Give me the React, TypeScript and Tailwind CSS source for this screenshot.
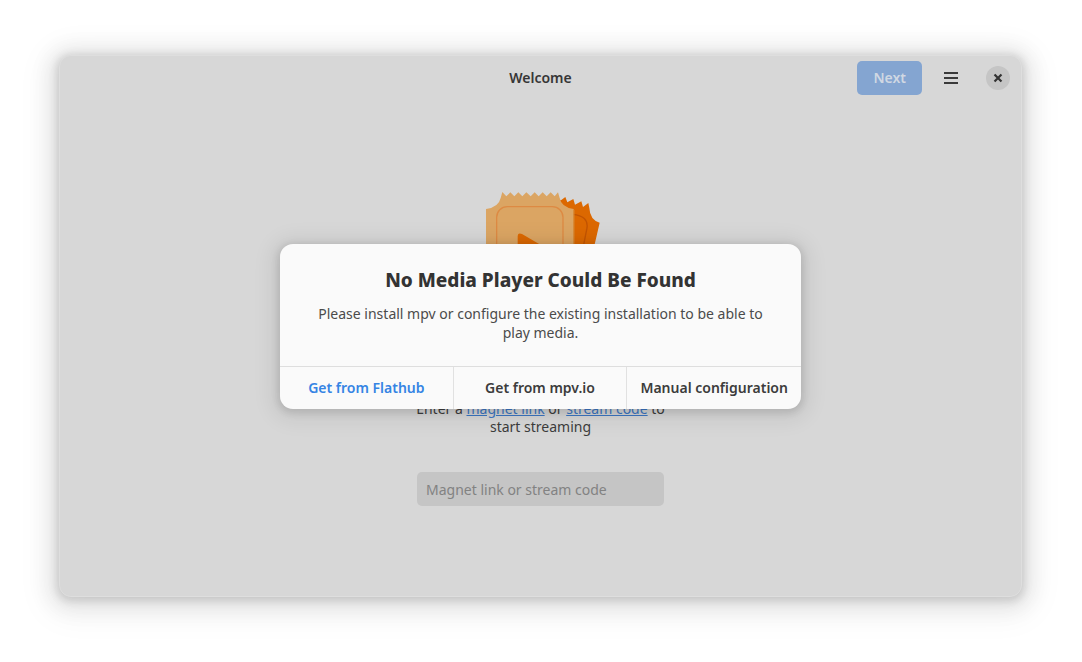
import React from "react";

function TicketIcon() {
  return (
    <svg viewBox="21 30 384 384" className="size-32" aria-hidden="true">
      <path
        d="M262 62 L274 60 L286 51 L292 67 L310 57 L315 74 L334 64 L339 81 L355 69 L358 84 Q360 120 389 128 L340 340 L240 340 Z"
        fill="#dc6800"
      />
      <path d="M308 103 Q356 108 351 144 L330 250" fill="none" stroke="#c25400" strokeWidth="4" />
      <path
        d="M48 87 Q86 82 92 54 L97 36 L109 49 L121 37 L133 49 L145 37 L157 49 L169 37 L182 49 L194 37 L206 49 L218 37 L230 49 L242 37 L254 49 L264 37 L269 54 Q274 82 311 87 L311 340 L48 340 Z"
        fill="#dba563"
      />
      <path d="M312 90 V340" stroke="#d6862f" strokeWidth="3" />
      <rect x="80" y="80" width="199" height="240" rx="32" fill="none" stroke="#dd8a43" strokeWidth="4" />
      <path d="M143 170 Q143 156 156 162 L238 210 L156 262 Q143 268 143 256 Z" fill="#dc6800" />
    </svg>
  );
}

function MenuIcon() {
  return (
    <svg viewBox="0 0 16 16" className="size-4" aria-hidden="true">
      <path d="M1 3h14M1 8h14M1 13h14" stroke="#3a3a3a" strokeWidth="2" />
    </svg>
  );
}

function CloseIcon() {
  return (
    <svg viewBox="0 0 16 16" className="size-4" aria-hidden="true">
      <path d="M5.3 5.3l5.4 5.4M10.7 5.3l-5.4 5.4" stroke="#333333" strokeWidth="2.2" strokeLinecap="square" />
    </svg>
  );
}

function HeaderBar() {
  return (
    <header className="grid grid-cols-[1fr_auto_1fr] items-center px-[11px] pt-[5px]">
      <span />
      <h1 className="text-sm font-semibold text-[#363636]">Welcome</h1>
      <div className="flex items-center justify-end">
        <button type="button" disabled className="h-[34px] rounded-[5px] bg-[#84a5d1] px-4 text-sm font-semibold text-[#d0d8e3]">
          Next
        </button>
        <button type="button" aria-label="Main menu" className="ml-3 flex size-[34px] items-center justify-center">
          <MenuIcon />
        </button>
        <button type="button" aria-label="Close" className="ml-[18px] flex size-6 items-center justify-center rounded-full bg-[#c5c5c5]">
          <CloseIcon />
        </button>
      </div>
    </header>
  );
}

function WelcomePage() {
  return (
    <main className="flex flex-1 flex-col items-center pt-[95px]">
      <TicketIcon />
      <p className="mt-[82px] w-[260px] text-center text-sm leading-[18px] text-[#3d3d3d]">
        Enter a{" "}
        <a href="#magnet" className="text-[#3d77c4] underline">
          magnet link
        </a>{" "}
        or{" "}
        <a href="#stream" className="text-[#3d77c4] underline">
          stream code
        </a>{" "}
        to start streaming
      </p>
      <input
        type="text"
        aria-label="Magnet link or stream code"
        placeholder="Magnet link or stream code"
        className="mt-9 h-[34px] w-[247px] rounded-[5px] bg-[#c5c5c5] px-[9px] text-sm text-[#363636] placeholder:text-[#828282]"
      />
    </main>
  );
}

function PlayerDialog() {
  return (
    <div
      role="alertdialog"
      aria-labelledby="dialog-title"
      aria-describedby="dialog-body"
      className="w-[521px] overflow-hidden rounded-[13px] bg-[#fafafa] text-center shadow-[0_2px_8px_2px_rgba(0,0,0,0.13),0_3px_20px_10px_rgba(0,0,0,0.06)]"
    >
      <div className="px-8 pt-6 pb-6">
        <h2 id="dialog-title" className="text-[19px] leading-6 font-extrabold text-[#333333]">
          No Media Player Could Be Found
        </h2>
        <p id="dialog-body" className="mt-3 text-sm leading-[19px] text-[#4b4b4b]">
          Please install mpv or configure the existing installation to be able to play media.
        </p>
      </div>
      <div className="grid grid-cols-3 divide-x divide-[#e1e1e1] border-t border-[#dedede] text-sm font-semibold whitespace-nowrap text-[#3c3c3c]">
        <button type="button" className="h-[42px] text-[#3584e4]">
          Get from Flathub
        </button>
        <button type="button" className="h-[42px]">
          Get from mpv.io
        </button>
        <button type="button" className="h-[42px]">
          Manual configuration
        </button>
      </div>
    </div>
  );
}

export default function App() {
  return (
    <div className="flex min-h-screen bg-white pt-[55px] pr-[60px] pb-[65px] pl-[59px] font-['Noto_Sans',sans-serif]">
      <div className="relative flex flex-1 flex-col rounded-xl border border-[#dedede] bg-[#d7d7d7] shadow-[0_2px_8px_2px_rgba(0,0,0,0.13),0_3px_20px_10px_rgba(0,0,0,0.08),0_6px_32px_16px_rgba(0,0,0,0.04)]">
        <HeaderBar />
        <WelcomePage />
        <div className="absolute inset-0 flex items-center justify-center">
          <PlayerDialog />
        </div>
      </div>
    </div>
  );
}
